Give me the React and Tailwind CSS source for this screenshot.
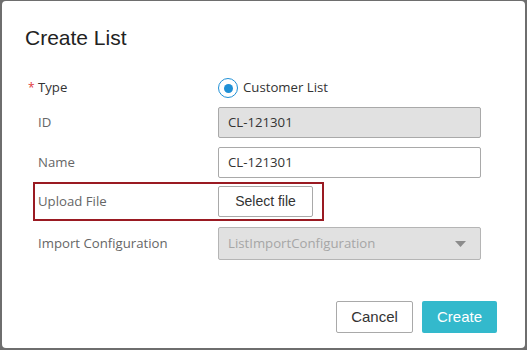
export default function App() {
  const seg = { fontFamily: '"Open Sans", "Noto Sans", sans-serif' };
  const arial = { fontFamily: '"Liberation Sans", Arial, sans-serif' };
  return (
    <div className="w-[527px] h-[350px] bg-[#6e6e6e] pt-[1px] px-[2px] pb-[2px] overflow-hidden">
      <div className="w-full h-full bg-white rounded-[4px] relative flex flex-col">
        <div className="pl-[23px] pt-[25px] text-[21px] leading-[24px] text-[#222]" style={arial}>
          Create List
        </div>
        <div className="pl-[31px] pt-[27px] flex flex-col text-[13.2px]" style={seg}>
          {/* Type */}
          <div className="flex items-center h-[22px] pl-[5px]">
            <div className="w-[180px] text-[#333] flex items-center">
              <span className="text-[#e0373b] -ml-[10px] w-[10px] text-[12px]">*</span>
              <span>Type</span>
            </div>
            <div className="flex items-center gap-[5px] text-[#333]">
              <span className="w-[20px] h-[20px] rounded-full border-[1.5px] border-[#1f90d6] flex items-center justify-center">
                <span className="w-[9px] h-[9px] rounded-full bg-[#1f90d6]" />
              </span>
              <span>Customer List</span>
            </div>
          </div>
          {/* ID */}
          <div className="flex items-center mt-[8px] pl-[5px]">
            <div className="w-[180px] text-[#666]">ID</div>
            <div className="w-[263px] h-[31px] rounded-[2px] border border-[#a9a9a9] bg-[#e1e1e1] flex items-center pl-[9px] text-[#333]">
              CL-121301
            </div>
          </div>
          {/* Name */}
          <div className="flex items-center mt-[9px] pl-[5px]">
            <div className="w-[180px] text-[#666]">Name</div>
            <div className="w-[263px] h-[31px] rounded-[2px] border border-[#a9a9a9] bg-white flex items-center pl-[9px] text-[#333]">
              CL-121301
            </div>
          </div>
          {/* Upload */}
          <div className="flex items-center mt-[4px] w-[291px] h-[39px] border-2 border-[#9a1a22] pl-[3px]">
            <div className="w-[180px] text-[#666]">Upload File</div>
            <div
              className="w-[95px] h-[31px] rounded-[2px] border border-[#a9a9a9] bg-white flex items-center justify-center text-[14px] text-[#333]"
              style={arial}
            >
              Select file
            </div>
          </div>
          {/* Import */}
          <div className="flex items-center mt-[6px] pl-[5px]">
            <div className="w-[180px] text-[#666]">Import Configuration</div>
            <div className="w-[263px] h-[33px] rounded-[2px] border border-[#b5b5b5] bg-[#e1e1e1] flex items-center pl-[9px] pr-[14px] justify-between text-[#a6a6a6]">
              <span>ListImportConfiguration</span>
              <svg width="11" height="6" viewBox="0 0 11 6">
                <path d="M0 0 L11 0 L5.5 6 Z" fill="#8c8c8c" />
              </svg>
            </div>
          </div>
        </div>
        <div className="flex justify-end gap-[9px] pr-[28px] mt-[41px] text-[15px]" style={arial}>
          <div className="w-[77px] h-[32px] rounded-[2px] border border-[#a9a9a9] bg-white flex items-center justify-center text-[#333]">
            Cancel
          </div>
          <div className="w-[75px] h-[32px] rounded-[2px] bg-[#33b9cc] flex items-center justify-center text-white">
            Create
          </div>
        </div>
      </div>
    </div>
  );
}
